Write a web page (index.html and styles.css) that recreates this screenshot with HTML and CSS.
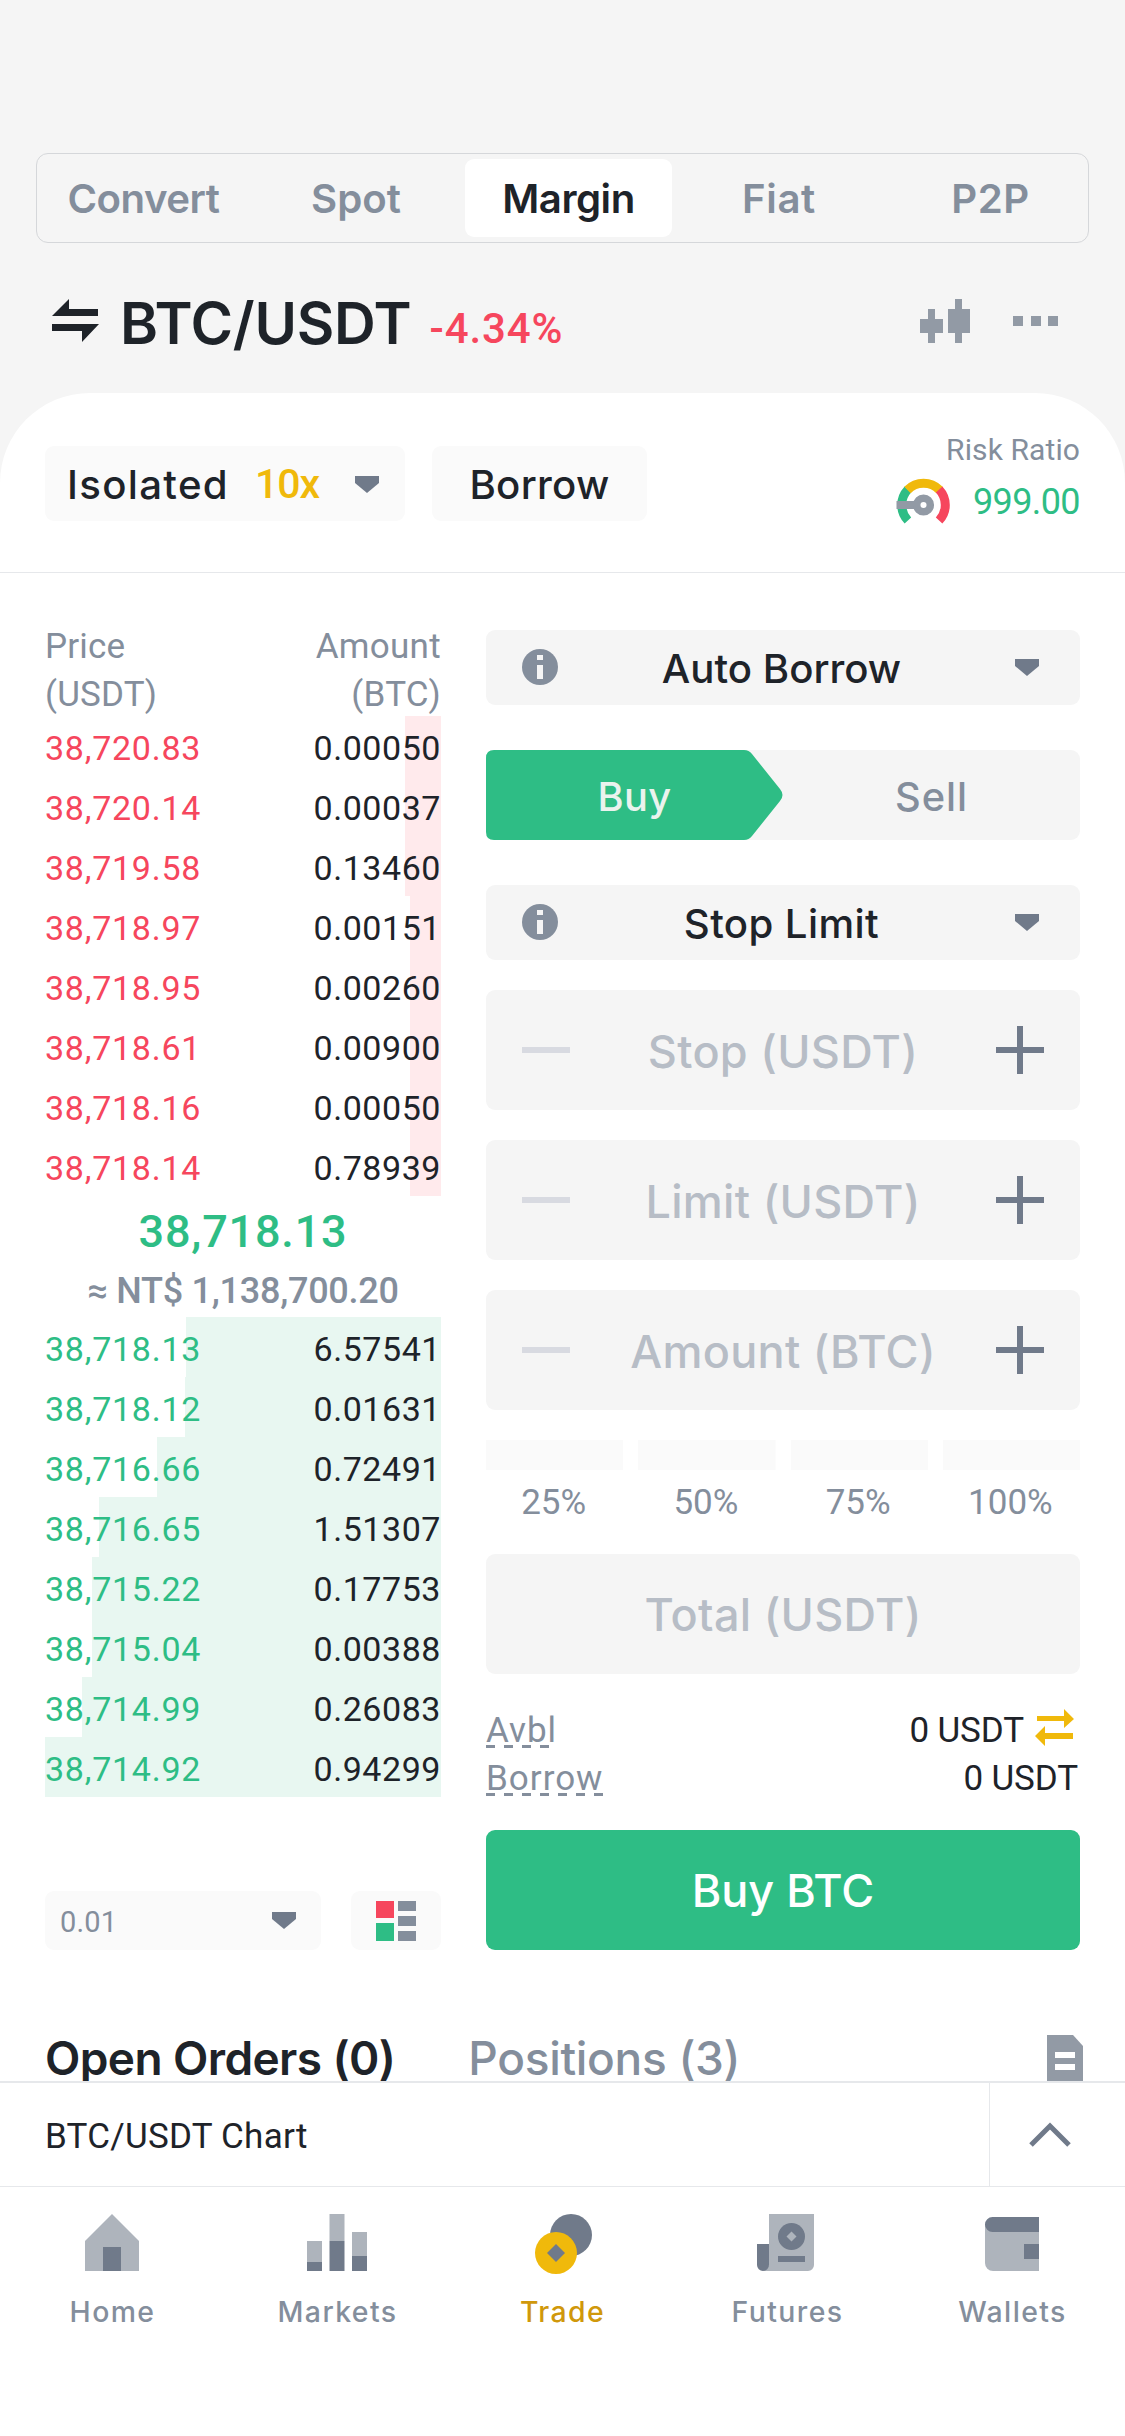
FILE: index.html
```html
<!DOCTYPE html>
<html lang="en">
<head>
<meta charset="utf-8">
<title>BTC/USDT Margin</title>
<link rel="stylesheet" href="styles.css">
</head>
<body>
<header class="header">
  <nav class="tabs">
    <a class="tab">Convert</a>
    <a class="tab">Spot</a>
    <a class="tab tab-active">Margin</a>
    <a class="tab">Fiat</a>
    <a class="tab">P2P</a>
  </nav>
  <div class="pair">
    <svg class="swap" width="48" height="44" viewBox="0 0 48 44"><path fill="#1e2329" d="M0 17 17 0v10h29v7zM0 25h47L30 43V32H0z"/></svg>
    <h1 class="pair-name">BTC/USDT</h1>
    <span class="change">-4.34%</span>
    <svg class="candles" width="50" height="46" viewBox="0 0 50 46"><path fill="#929aa5" d="M8 11h7v10h8v14h-8v10H8V35H0V21h8zM35 1h7v10h8v24h-8v10h-7V35h-7V11h7z"/></svg>
    <svg class="dots" width="46" height="10" viewBox="0 0 46 10"><path fill="#929aa5" d="M0 0h10v10H0zM18 0h10v10H18zM35 0h10v10H35z"/></svg>
  </div>
</header>

<main class="panel">
  <section class="toolbar">
    <button class="chip chip-mode">Isolated <b class="leverage">10x</b>
      <svg class="caret" width="24" height="17" viewBox="0 0 24 17"><path fill="#707a8a" d="M0 0h24v7L12 17 0 7z"/></svg>
    </button>
    <button class="chip chip-borrow">Borrow</button>
    <div class="risk">
      <div class="risk-label">Risk Ratio</div>
      <div class="risk-row">
        <svg width="56" height="48" viewBox="0 0 56 48" fill="none">
          <g stroke-width="9">
            <path stroke="#2ebd85" d="M11.9 42.5A22.5 22.5 0 0 1 11.9 11.5"/>
            <path stroke="#f0b90b" d="M11.5 12A22.5 22.5 0 0 1 43.5 12"/>
            <path stroke="#f6465d" d="M43.1 11.5A22.5 22.5 0 0 1 43.1 42.5"/>
          </g>
          <path fill="#929aa5" d="M.5 23H20v8H.5z"/>
          <circle cx="27.500" cy="27" r="6.800" fill="#fff" stroke="#929aa5" stroke-width="7.500"/>
        </svg>
        <span class="risk-value">999.00</span>
      </div>
    </div>
  </section>

  <div class="columns">
    <section class="book">
      <div class="book-head"><span>Price<br>(USDT)</span><span class="right">Amount<br>(BTC)</span></div>
      <div class="asks">
        <div class="row" style="--depth:36px"><span>38,720.83</span><em>0.00050</em></div>
        <div class="row" style="--depth:36px"><span>38,720.14</span><em>0.00037</em></div>
        <div class="row" style="--depth:36px"><span>38,719.58</span><em>0.13460</em></div>
        <div class="row" style="--depth:31px"><span>38,718.97</span><em>0.00151</em></div>
        <div class="row" style="--depth:31px"><span>38,718.95</span><em>0.00260</em></div>
        <div class="row" style="--depth:31px"><span>38,718.61</span><em>0.00900</em></div>
        <div class="row" style="--depth:31px"><span>38,718.16</span><em>0.00050</em></div>
        <div class="row" style="--depth:31px"><span>38,718.14</span><em>0.78939</em></div>
      </div>
      <div class="last">38,718.13</div>
      <div class="fiat">≈ NT$ 1,138,700.20</div>
      <div class="bids">
        <div class="row" style="--depth:255px"><span>38,718.13</span><em>6.57541</em></div>
        <div class="row" style="--depth:256px"><span>38,718.12</span><em>0.01631</em></div>
        <div class="row" style="--depth:284px"><span>38,716.66</span><em>0.72491</em></div>
        <div class="row" style="--depth:342px"><span>38,716.65</span><em>1.51307</em></div>
        <div class="row" style="--depth:349px"><span>38,715.22</span><em>0.17753</em></div>
        <div class="row" style="--depth:349px"><span>38,715.04</span><em>0.00388</em></div>
        <div class="row" style="--depth:359px"><span>38,714.99</span><em>0.26083</em></div>
        <div class="row" style="--depth:396px"><span>38,714.92</span><em>0.94299</em></div>
      </div>
      <div class="book-tools">
        <div class="precision">0.01
          <svg width="24" height="17" viewBox="0 0 24 17"><path fill="#707a8a" d="M0 0h24v7L12 17 0 7z"/></svg>
        </div>
        <div class="view">
          <svg width="40" height="40" viewBox="0 0 40 40"><path fill="#f6465d" d="M0 0h18v17H0z"/><path fill="#2ebd85" d="M0 22h18v18H0z"/><path fill="#848e9c" d="M22 0h18v10H22zM22 15h18v10H22zM22 30h18v10H22z"/></svg>
        </div>
      </div>
    </section>

    <section class="form">
      <div class="select">
        <svg width="36" height="36" viewBox="0 0 36 36"><circle cx="18" cy="18" r="18" fill="#848e9c"/><path fill="#f5f5f5" d="M15 6h6v5h-6zM15 16h6v14h-6z"/></svg>
        <span>Auto Borrow</span>
        <svg width="24" height="17" viewBox="0 0 24 17"><path fill="#707a8a" d="M0 0h24v7L12 17 0 7z"/></svg>
      </div>
      <div class="sides">
        <div class="side side-buy">
          <svg class="side-shape" width="297" height="90" viewBox="0 0 297 90"><path fill="#2ebd85" d="M8 0H258Q263 0 266 4L294 39Q299 45 294 51L266 86Q263 90 258 90H8Q0 90 0 82V8Q0 0 8 0z"/></svg>
          <span class="side-text">Buy</span>
        </div>
        <div class="side">Sell</div>
      </div>
      <div class="select select-type">
        <svg width="36" height="36" viewBox="0 0 36 36"><circle cx="18" cy="18" r="18" fill="#848e9c"/><path fill="#f5f5f5" d="M15 6h6v5h-6zM15 16h6v14h-6z"/></svg>
        <span>Stop Limit</span>
        <svg width="24" height="17" viewBox="0 0 24 17"><path fill="#707a8a" d="M0 0h24v7L12 17 0 7z"/></svg>
      </div>
      <div class="field"><i class="minus"></i><span>Stop (USDT)</span><i class="plus"></i></div>
      <div class="field"><i class="minus"></i><span>Limit (USDT)</span><i class="plus"></i></div>
      <div class="field"><i class="minus"></i><span>Amount (BTC)</span><i class="plus"></i></div>
      <div class="percents">
        <div class="percent">25%</div>
        <div class="percent">50%</div>
        <div class="percent">75%</div>
        <div class="percent">100%</div>
      </div>
      <div class="field field-total"><span>Total (USDT)</span></div>
      <div class="balances">
        <div class="balance"><span class="term term-avbl">Avbl</span>
          <span class="sum">0 USDT</span>
          <svg class="transfer" width="40" height="40" viewBox="0 0 40 40"><path fill="#f0b90b" d="M2 8h27V1l10 10-10 9v-7H2zM38 25H10v-7L0 28l10 10v-7h28z"/></svg>
        </div>
        <div class="balance"><span class="term term-borrow">Borrow</span><span class="sum">0 USDT</span></div>
      </div>
      <button class="submit">Buy BTC</button>
    </section>
  </div>

  <section class="orders">
    <h2 class="orders-tab orders-open">Open Orders (0)</h2>
    <h2 class="orders-tab">Positions (3)</h2>
    <svg class="doc" width="36" height="46" viewBox="0 0 36 46"><path fill="#929aa5" d="M0 0h26l10 11v35H0z"/><path fill="#fff" d="M8 17h20v6H8zM8 29h20v6H8z"/></svg>
  </section>
</main>

<section class="chart-bar">
  <span class="chart-title">BTC/USDT Chart</span>
  <div class="chart-toggle"><svg width="42" height="26" viewBox="0 0 42 26"><path fill="none" stroke="#707a8a" stroke-width="5" d="M2 23 21 4l19 19"/></svg></div>
</section>

<nav class="bottom-nav">
  <a class="nav-item">
    <svg width="60" height="60" viewBox="0 0 60 60"><path fill="#aeb4bc" d="M3 27 30 0l27 27v30H3z"/><path fill="#707a8a" d="M21 33h18v24H21z"/></svg>
    <span>Home</span>
  </a>
  <a class="nav-item">
    <svg width="60" height="60" viewBox="0 0 60 60"><path fill="#aeb4bc" d="M0 27h15v21H0zM22.500 0h15v27h-15zM45 18h15v24H45z"/><path fill="#707a8a" d="M0 48h15v9H0zM22.500 27h15v30h-15zM45 42h15v15H45z"/></svg>
    <span>Markets</span>
  </a>
  <a class="nav-item nav-active">
    <svg width="60" height="60" viewBox="0 0 60 60"><circle cx="39" cy="21" r="21" fill="#707a8a"/><circle cx="24" cy="39" r="21" fill="#f0b90b"/><path fill="#707a8a" d="m24 30 9 9-9 9-9-9z"/></svg>
    <span>Trade</span>
  </a>
  <a class="nav-item">
    <svg width="60" height="60" viewBox="0 0 60 60"><path fill="#aeb4bc" d="M12 0h45v51a6 6 0 0 1-6 6H6l6-6z"/><path fill="#707a8a" d="M0 30h12v21a6 6 0 0 1-12 0zM21 42h27v6H21z"/><circle cx="34.500" cy="22.500" r="13.500" fill="#707a8a"/><path fill="#aeb4bc" d="m34.500 17.500 5 5-5 5-5-5z"/></svg>
    <span>Futures</span>
  </a>
  <a class="nav-item">
    <svg width="60" height="60" viewBox="0 0 60 60"><path fill="#aeb4bc" d="M3 10h54v47H11a8 8 0 0 1-8-8z"/><path fill="#707a8a" d="M10.500 3H57v15H10.500a7.500 7.500 0 0 1 0-15zM42 30h15v15H42z"/></svg>
    <span>Wallets</span>
  </a>
</nav>
</body>
</html>
```
FILE: styles.css
```css
* { box-sizing: border-box; }

body {
  margin: 0;
  width: 1125px;
  height: 2436px;
  overflow: hidden;
  display: flex;
  flex-direction: column;
  background: #f5f5f5;
  color: #1e2329;
  font-family: Roboto, sans-serif;
}

svg { display: block; flex: none; }

button {
  border: 0;
  padding: 0;
  color: inherit;
}

/* header */
.header {
  flex: none;
  height: 393px;
  padding: 153px 36px 0;
}

.tabs {
  height: 90px;
  padding: 5px 3px;
  display: grid;
  grid-template-columns: repeat(4, 211.500px) 1fr;
  border: 1px solid #d5d7da;
  border-radius: 12px;
}

.tab {
  display: flex;
  align-items: center;
  justify-content: center;
  width: 207px;
  height: 78px;
  padding-top: 1px;
  color: #848e9c;
  font: 600 40.200px Inter, sans-serif;
  letter-spacing: -.5px;
}

.tab:nth-child(2) { letter-spacing: 0; padding-left: 2px; }
.tab:nth-child(4) { letter-spacing: .6px; padding-left: 2px; }
.tab:nth-child(5) { letter-spacing: .5px; padding-left: 2px; }

.tab-active {
  margin-left: 2px;
  background: #fff;
  border-radius: 9px;
  color: #1e2329;
}

.pair {
  height: 150px;
  padding: 10px 30px 0 16px;
  display: flex;
  align-items: center;
}

.swap { margin-top: -4px; }

.pair-name {
  margin: 0 0 0 20px;
  font: 600 57.800px/80px Inter, sans-serif;
  letter-spacing: -.3px;
}

.change {
  margin: 11px 0 0 18px;
  color: #f6465d;
  font-size: 42px;
  font-weight: 500;
  letter-spacing: .9px;
}

.candles { margin: -4px 43px 0 auto; }
.dots { margin-top: -4px; }

/* white panel */
.panel {
  flex: none;
  height: 1688px;
  overflow: hidden;
  background: #fff;
  border-radius: 90px 90px 0 0;
}

.toolbar {
  height: 180px;
  padding: 53px 45px 0;
  display: flex;
  align-items: flex-start;
  border-bottom: 1px solid #e6e8eb;
}

.chip {
  height: 75px;
  display: flex;
  align-items: center;
  background: #fafafa;
  border-radius: 9px;
  font: 500 40.200px Inter, sans-serif;
}

.chip-mode {
  width: 360px;
  padding: 1px 26px 0 22px;
  letter-spacing: 1.300px;
}

.leverage {
  margin-left: 26px;
  color: #f0b90b;
  font: 500 41px Roboto, sans-serif;
  letter-spacing: -1px;
}

.caret { margin-left: auto; }

.chip-borrow {
  width: 215px;
  padding-top: 1px;
  margin-left: 27px;
  justify-content: center;
  letter-spacing: .3px;
}

.risk {
  margin: -21px 0 0 auto;
  text-align: right;
}

.risk-label {
  color: #848e9c;
  font-size: 30px;
  line-height: 50px;
  letter-spacing: .1px;
}

.risk-row {
  height: 52px;
  padding-top: 2px;
  display: flex;
  align-items: center;
  justify-content: space-between;
  gap: 21px;
}

.risk-value {
  color: #2ebd85;
  font-size: 36px;
  letter-spacing: -.6px;
}

.columns {
  height: 1377px;
  padding: 0 45px;
  display: flex;
  justify-content: space-between;
}

/* order book */
.book {
  width: 396px;
  padding-top: 50px;
}

.book-head {
  height: 93px;
  display: flex;
  justify-content: space-between;
  color: #848e9c;
  font-size: 35px;
  line-height: 48px;
  letter-spacing: .2px;
}

.right { text-align: right; letter-spacing: .3px; }

.row {
  height: 60px;
  padding-top: 3px;
  display: flex;
  justify-content: space-between;
  align-items: center;
  background-position: right;
  background-repeat: no-repeat;
  background-size: var(--depth) 100%;
  font-size: 34px;
  letter-spacing: .75px;
}

.asks .row {
  color: #f6465d;
  background-image: linear-gradient(#ffeaec, #ffeaec);
}

.bids .row {
  color: #2ebd85;
  background-image: linear-gradient(#e8f7f1, #e8f7f1);
}

.row em {
  color: #1e2329;
  font-style: normal;
  letter-spacing: .55px;
}

.last {
  height: 66px;
  text-align: center;
  color: #2ebd85;
  font-size: 45px;
  font-weight: 500;
  line-height: 71px;
  letter-spacing: .82px;
}

.fiat {
  height: 55px;
  text-align: center;
  color: #848e9c;
  font-size: 36px;
  font-weight: 500;
  line-height: 59px;
  letter-spacing: -.27px;
}

.book-tools {
  margin-top: 94px;
  display: flex;
  justify-content: space-between;
}

.precision,
.view {
  height: 59px;
  display: flex;
  align-items: center;
  background: #fafafa;
  border-radius: 9px;
}

.precision {
  width: 276px;
  padding: 2px 25px 0 15px;
  justify-content: space-between;
  color: #848e9c;
  font-size: 29px;
  letter-spacing: .2px;
}

.precision svg { margin-top: -3px; }

.view {
  width: 90px;
  justify-content: center;
}

/* order form */
.form {
  width: 594px;
  padding-top: 57px;
}

.select {
  height: 75px;
  padding: 0 41px 0 36px;
  display: flex;
  align-items: center;
  justify-content: space-between;
  background: #f5f5f5;
  border-radius: 9px;
  font: 500 40.200px Inter, sans-serif;
}

.select span { padding: 1px 10px 0 0; }
.select svg { margin-top: -1px; }

.sides {
  height: 90px;
  margin: 45px 0;
  display: grid;
  grid-template-columns: 1fr 1fr;
  background: #f5f5f5;
  border-radius: 9px;
}

.side {
  display: flex;
  align-items: center;
  justify-content: center;
  color: #848e9c;
  font: 500 39.800px Inter, sans-serif;
  letter-spacing: 1px;
  padding-top: 2px;
}

.side-buy {
  position: relative;
  color: #eaf3ee;
  letter-spacing: .4px;
}

.side-shape {
  position: absolute;
  left: 0;
  top: 0;
}

.side-text { position: relative; }

.select-type { letter-spacing: .4px; }

.field {
  height: 120px;
  margin-top: 30px;
  padding: 2px 36px 0;
  display: flex;
  align-items: center;
  justify-content: space-between;
  background: #f5f5f5;
  border-radius: 9px;
  color: #b7bdc6;
  font: 500 45px Inter, sans-serif;
  letter-spacing: .3px;
}

.minus,
.plus {
  width: 48px;
  height: 48px;
  margin-top: -2px;
  background: linear-gradient(#d8dae1, #d8dae1) center / 48px 6px no-repeat;
}

.plus {
  background:
    linear-gradient(#707a8a, #707a8a) center / 48px 6px no-repeat,
    linear-gradient(#707a8a, #707a8a) center / 6px 48px no-repeat;
}

.percents {
  height: 92px;
  margin-top: 30px;
  display: grid;
  grid-template-columns: repeat(4, 1fr);
  gap: 15px;
}

.percent {
  padding: 30px 2px 0 0;
  background: linear-gradient(#fafafa, #fafafa) top / 100% 30px no-repeat;
  text-align: center;
  color: #848e9c;
  font-size: 35px;
  line-height: 65px;
}

.field-total {
  margin-top: 22px;
  padding-top: 0;
  justify-content: center;
}

.balances { padding: 32px 0 28px; }

.balance {
  height: 48px;
  display: flex;
  font-size: 35px;
  line-height: 49px;
  letter-spacing: -.1px;
}

.term {
  height: 42px;
  color: #848e9c;
  letter-spacing: 1px;
  background: repeating-linear-gradient(90deg, #848e9c 0 9px, transparent 9px 18px) bottom left / 100% 3px no-repeat;
}

.term-avbl { width: 70px; }
.term-borrow { width: 117px; }

.sum {
  margin-left: auto;
  padding-right: 2px;
}

.transfer { margin: 2px 5px 0 9px; }

.submit {
  width: 100%;
  height: 120px;
  background: #2ebd85;
  border-radius: 9px;
  color: #fff;
  font: 500 45px Inter, sans-serif;
}

/* orders */
.orders {
  height: 131px;
  padding: 85px 42px 0 45px;
  display: flex;
  align-items: flex-start;
}

.orders-tab {
  flex: none;
  margin: -7px 0 0 73px;
  color: #848e9c;
  font: 500 46px/60px Inter, sans-serif;
  letter-spacing: -.3px;
}

.orders-open {
  margin-left: 0;
  color: #1e2329;
  font-weight: 600;
  letter-spacing: -.6px;
}

.doc { margin-left: auto; }

/* chart bar */
.chart-bar {
  flex: none;
  height: 105px;
  padding-left: 45px;
  display: flex;
  align-items: center;
  justify-content: space-between;
  background: #fff;
  border-top: 2px solid #e6e8eb;
  font-size: 35px;
  letter-spacing: .25px;
}

.chart-title { padding-top: 3px; }

.chart-toggle {
  width: 136px;
  height: 100%;
  padding-right: 15px;
  display: flex;
  align-items: center;
  justify-content: center;
  border-left: 1px solid #e6e8eb;
}

/* bottom navigation */
.bottom-nav {
  flex: 1;
  padding-top: 27px;
  display: grid;
  grid-template-columns: repeat(5, 1fr);
  background: #fff;
  border-top: 1px solid #e6e8eb;
}

.nav-item {
  display: flex;
  flex-direction: column;
  align-items: center;
  color: #848e9c;
  font: 500 28.400px/40px Inter, sans-serif;
  letter-spacing: 1.400px;
}

.nav-item svg { margin-right: 1px; }
.nav-item span { margin-top: 18px; }

.nav-active { color: #d0980b; }
```
